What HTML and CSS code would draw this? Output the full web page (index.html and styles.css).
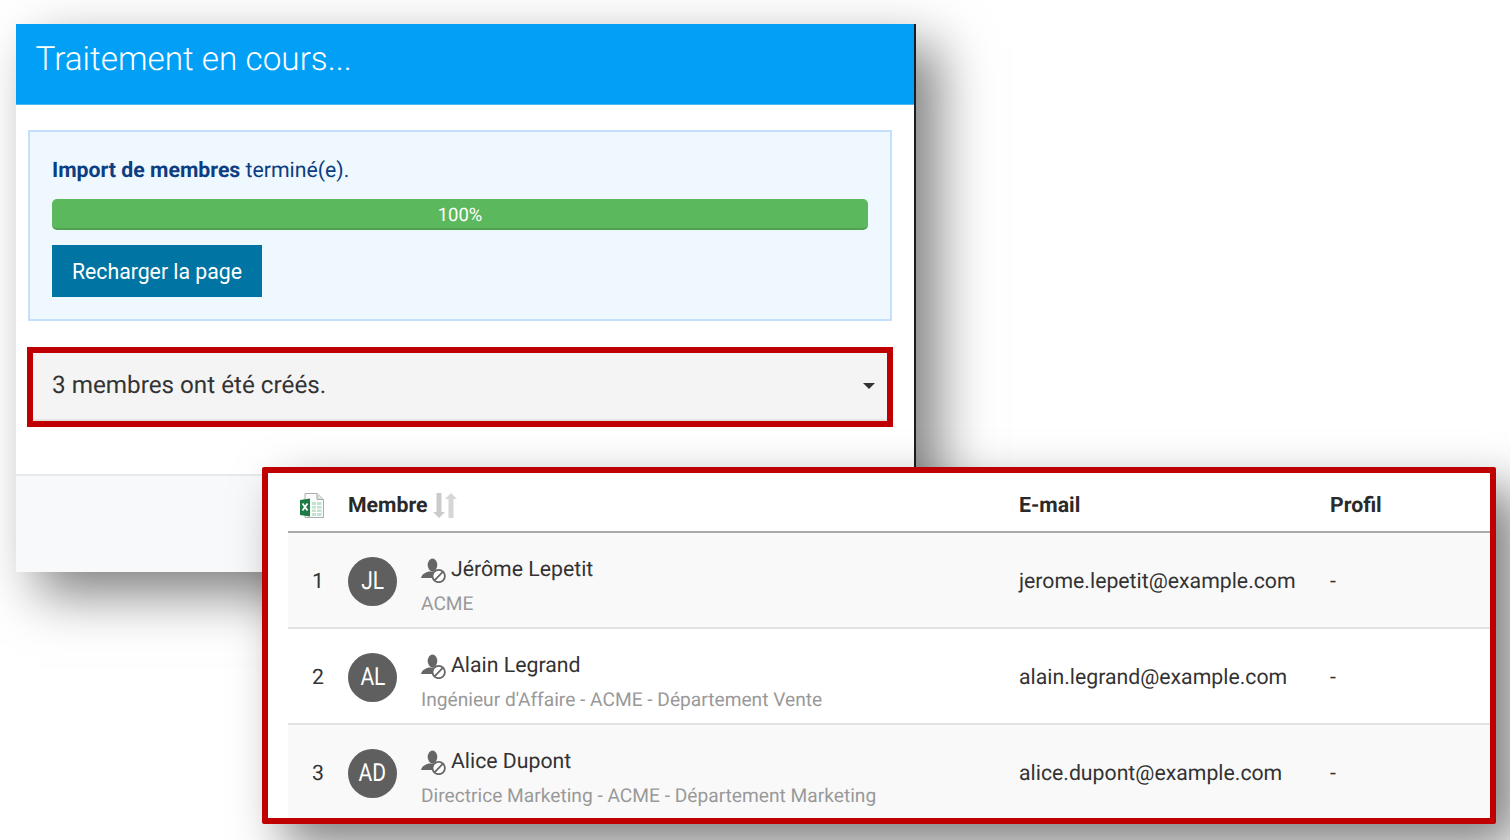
FILE: index.html
```html
<!DOCTYPE html>
<html lang="fr">
<head>
<meta charset="utf-8">
<title>Traitement en cours</title>
<link rel="stylesheet" href="styles.css">
</head>
<body>
<section class="modal">
  <header class="modal-head"><h1>Traitement en cours...</h1></header>
  <div class="modal-body">
    <div class="panel">
      <p class="panel-text"><strong>Import de membres</strong> terminé(e).</p>
      <div class="progress">100%</div>
      <button class="reload" type="button">Recharger la page</button>
    </div>
    <div class="result">
      <span>3 membres ont été créés.</span>
      <svg class="caret" viewBox="0 0 12 6" width="12" height="6"><path d="M0 0h12L6 6z"/></svg>
    </div>
  </div>
  <footer class="modal-foot"></footer>
</section>

<section class="members">
  <div class="row head">
    <div class="cell-n">
      <svg class="xls" viewBox="0 0 25 25" width="25" height="25">
        <path d="M6 .5h12l6.500 6v18H6z" fill="#fbfbfb" stroke="#a9adab"/>
        <path d="M18 .5v6h6.500" fill="#dfe1e0" stroke="#a9adab"/>
        <path d="M13 9h9.500v14H13z" fill="#bfe3cf"/>
        <path d="M13 12.500h9.500M13 16h9.500M13 19.500h9.500M17.500 9v14" stroke="#fff" fill="none"/>
        <path d="M1 7l10-1.500v18L1 22z" fill="#1f7a45"/>
        <path d="M3.500 10.500l5 7M8.500 10.500l-5 7" stroke="#fff" stroke-width="1.800" fill="none"/>
      </svg>
    </div>
    <div class="cell-m head-m">Membre
      <svg class="sort" viewBox="0 0 24 25" width="24" height="25">
        <path d="M3.500 0h5v19H12l-6 6-6-6h3.500z" fill="#cbcbcb"/>
        <path d="M15.500 25h5V6H24l-6-6-6 6h3.500z" fill="#d6d6d6"/>
      </svg>
    </div>
    <div class="cell-e">E-mail</div>
    <div>Profil</div>
  </div>

  <div class="row item odd">
    <div class="cell-n">1</div>
    <div class="cell-m">
      <div class="avatar"><span>JL</span></div>
      <div class="who">
        <div class="name">
          <svg class="blocked" viewBox="0 0 25 25" width="25" height="25"><use href="#user-off"/></svg>Jérôme Lepetit
        </div>
        <div class="sub">ACME</div>
      </div>
    </div>
    <div class="cell-e">jerome.lepetit@example.com</div>
    <div>-</div>
  </div>

  <div class="row item">
    <div class="cell-n">2</div>
    <div class="cell-m">
      <div class="avatar"><span>AL</span></div>
      <div class="who">
        <div class="name">
          <svg class="blocked" viewBox="0 0 25 25" width="25" height="25"><use href="#user-off"/></svg>Alain Legrand
        </div>
        <div class="sub">Ingénieur d'Affaire - ACME - Département Vente</div>
      </div>
    </div>
    <div class="cell-e">alain.legrand@example.com</div>
    <div>-</div>
  </div>

  <div class="row item odd">
    <div class="cell-n">3</div>
    <div class="cell-m">
      <div class="avatar"><span>AD</span></div>
      <div class="who">
        <div class="name">
          <svg class="blocked" viewBox="0 0 25 25" width="25" height="25"><use href="#user-off"/></svg>Alice Dupont
        </div>
        <div class="sub">Directrice Marketing - ACME - Département Marketing</div>
      </div>
    </div>
    <div class="cell-e">alice.dupont@example.com</div>
    <div>-</div>
  </div>
</section>

<svg class="defs" width="0" height="0">
  <symbol id="user-off" viewBox="0 0 25 25">
    <ellipse cx="11.500" cy="7" rx="4.800" ry="6.500" fill="#666"/>
    <path d="M0 20c1-4 4-5 7.500-6.500h7c.5.500 1 1 1.500 1.500-2.500 1-4 3-4 5z" fill="#666"/>
    <circle cx="17.700" cy="18" r="6.200" fill="#fff" stroke="#666" stroke-width="1.800"/>
    <path d="M13.500 22.300l8.500-8.600" stroke="#666" stroke-width="1.800"/>
  </symbol>
</svg>
</body>
</html>
```

FILE: styles.css
```css
* { box-sizing: border-box; }

html, body {
  margin: 0;
  height: 100%;
  background: #fff;
  overflow: hidden;
}

body {
  font-family: Roboto, "Liberation Sans", sans-serif;
  font-size: 21.25px;
  color: #333;
  text-rendering: geometricPrecision;
}

.modal {
  width: 900px;
  height: 548px;
  margin: 24px 0 0 16px;
  display: flex;
  flex-direction: column;
  background: #fff;
  border-right: 2px solid;
  border-image: linear-gradient(90deg, #6b7680 50%, #1c1c1c 50%) 1;
  box-shadow: 22px 22px 50px rgba(0, 0, 0, .5);
}

.modal-head {
  height: 81px;
  padding-left: 19.5px;
  display: flex;
  align-items: center;
  background: #029ff7;
  border-bottom: 1px solid #4db9f5;
}

.modal-head h1 {
  margin: 0 0 9px;
  font-size: 33.3px;
  font-weight: 300;
  color: #fff;
}

.modal-body {
  flex: 1;
  padding: 25px 22px 0 12px;
}

.panel {
  height: 191px;
  padding: 23px 22px 0;
  background: #eff7ff;
  border: 2px solid #c4defd;
}

.panel-text {
  margin: 0;
  height: 32px;
  line-height: 32px;
  color: #0b3e82;
}

.panel-text strong { font-weight: 700; }

.progress {
  height: 31px;
  margin-top: 12px;
  padding-top: 1px;
  line-height: 31px;
  text-align: center;
  font-size: 18.5px;
  color: #fff;
  background: #5cb85c;
  border-bottom: 2px solid #4fa04f;
  border-radius: 5px;
}

.reload {
  display: block;
  width: 210px;
  height: 52px;
  margin-top: 15px;
  padding: 0;
  border: 0;
  background: #0075a3;
  color: #fff;
  font: 400 21.25px Roboto, "Liberation Sans", sans-serif;
}

.result {
  height: 80px;
  margin: 26px -1px 0;
  padding: 0 12px 4px 19px;
  display: flex;
  align-items: center;
  justify-content: space-between;
  background: #f4f4f4;
  border: 6px solid #c00000;
  font-size: 24.25px;
  color: #333;
  box-shadow: inset 0 -2px 0 #e8e4df;
}

.caret { fill: #333; margin-top: 2px; }

.modal-foot {
  height: 98px;
  background: #f8f9fb;
  border-top: 2px solid #e8e9eb;
}

.members {
  position: absolute;
  left: 262px;
  top: 467px;
  width: 1234px;
  height: 357px;
  padding-left: 20px;
  overflow: hidden;
  background: #fff;
  border: 6px solid #c00000;
  border-radius: 2px;
  box-shadow: 22px 22px 50px rgba(0, 0, 0, .5);
}

.row {
  display: grid;
  grid-template-columns: 60px 671px 311px 1fr;
  align-items: center;
}

.head {
  height: 60px;
  padding-top: 6px;
  font-weight: 700;
  color: #2a2a2a;
  border-bottom: 2px solid #aaa;
}

.item {
  height: 96px;
  padding-top: 2px;
  border-bottom: 2px solid #e2e2e2;
}

.odd { background: #f9f9f9; }

.cell-n { padding-left: 24px; }
.head .cell-n { padding-left: 11px; display: flex; }

.cell-m {
  display: flex;
  align-items: center;
  gap: 24px;
}

.head .head-m { gap: 5px; }

.avatar {
  flex: none;
  width: 49px;
  height: 49px;
  border-radius: 50%;
  background: #5f5f5f;
  color: #fff;
  font-size: 25px;
  display: flex;
  align-items: center;
  justify-content: center;
}

.avatar span { transform: scaleX(.84); }

.who { margin-top: 8px; }

.name {
  display: flex;
  align-items: center;
  gap: 5px;
  height: 28px;
  color: #333;
}

.sub {
  margin-top: 9px;
  font-size: 19.17px;
  color: #999;
}

.blocked { margin-top: 2px; }

.defs { position: absolute; }
```
